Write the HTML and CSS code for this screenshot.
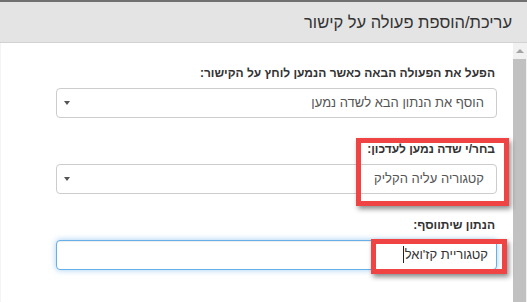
FILE: index.html
```html
<!DOCTYPE html>
<html lang="he" dir="rtl">

<head>
  <meta charset="UTF-8">
  <meta name="viewport" content="width=device-width, initial-scale=1.0">
  <title>עריכת/הוספת פעולה על קישור</title>

  <link rel="stylesheet" href="styles.css">
</head>

<body>
  <div class="topbar"></div>
  <div class="header">
    <h4>עריכת/הוספת פעולה על קישור</h4>
  </div>

  <div class="main">
    <!-- פס גלילה -->
    <div class="scrollbar">
      <div class="scroll_up"></div>
      <div class="scroll_thumb"></div>
    </div>

    <div class="content">
      <div class="field">
        <label>הפעל את הפעולה הבאה כאשר הנמען לוחץ על הקישור:</label>
        <div class="select">הוסף את הנתון הבא לשדה נמען</div>
      </div>

      <div class="field">
        <label>בחר/י שדה נמען לעדכון:</label>
        <div class="select">קטגוריה עליה הקליק</div>
      </div>

      <div class="field">
        <label>הנתון שיתווסף:</label>
        <div class="input focus">קטגוריית קז'ואל<span class="caret"></span></div>
      </div>

      <!-- סימון אדום -->
      <div class="mark mark_one"></div>
      <div class="mark mark_two"></div>
    </div>
  </div>
</body>

</html>
```

FILE: styles.css
```css
* {
  margin: 0;
  padding: 0;
  box-sizing: border-box;
}

body {
  width: 527px;
  height: 302px;
  overflow: hidden;
  background: white;
  font-family: "Liberation Sans", Arial, sans-serif;
  color: #333;
}

.topbar {
  height: 2px;
  background: #707070;
}

/* כותרת */
.header {
  height: 41px;
  background: #e4e4e4;
  border-bottom: 1px solid #d2d2d2;
  padding: 0 15px;
  display: flex;
  align-items: center;

  h4 {
    font-size: 16.5px;
    font-weight: normal;
    color: #333;
  }
}

.main {
  display: flex;
  height: 259px;
}

/* פס גלילה */
.scrollbar {
  width: 14px;
  display: flex;
  flex-direction: column;
  background: #f1f1f1;

  .scroll_up {
    height: 16px;
    display: flex;
    justify-content: center;
    align-items: center;
  }

  .scroll_up::after {
    content: '';
    border-left: 4px solid transparent;
    border-right: 4px solid transparent;
    border-bottom: 4px solid #a3a3a3;
  }

  .scroll_thumb {
    flex: 1;
    margin-right: 1px;
    background: #c1c1c1;
  }
}

.content {
  position: relative;
  flex: 1;
  padding: 21px 16px 0 55px;
  border-left: 1px solid #f4f4f4;
}

.field {
  margin-bottom: 22px;

  label {
    display: block;
    height: 18px;
    line-height: 18px;
    margin-bottom: 6px;
    padding-right: 2px;
    font-size: 12px;
    font-weight: bold;
    color: #333;
  }
}

/* שדות */
.select,
.input {
  position: relative;
  height: 30px;
  line-height: 28px;
  padding: 0 12px;
  border: 1px solid #ccc;
  border-radius: 4px;
  font-size: 13px;
  color: #555;
  background: white;
}

.select::after {
  position: absolute;
  content: '';
  left: 7px;
  top: 12px;
  border-left: 3px solid transparent;
  border-right: 3px solid transparent;
  border-top: 4px solid #555;
}

.input.focus {
  padding-right: 8px;
  border-color: #66afe9;
  box-shadow: inset 0 1px 1px rgba(0, 0, 0, .075), 0 0 6px rgba(102, 175, 233, .6);
  color: #333;
}

.caret {
  display: inline-block;
  width: 1px;
  height: 17px;
  margin-right: 1px;
  vertical-align: -4px;
  background: #222;
}

/* סימון אדום */
.mark {
  position: absolute;
  border: 5px solid #f04444;
  box-shadow: 2px 3px 5px rgba(0, 0, 0, .45);
}

.mark_one {
  top: 95px;
  left: 355px;
  width: 153px;
  height: 68px;
}

.mark_two {
  top: 196px;
  left: 370px;
  width: 136px;
  height: 35px;
}
```
